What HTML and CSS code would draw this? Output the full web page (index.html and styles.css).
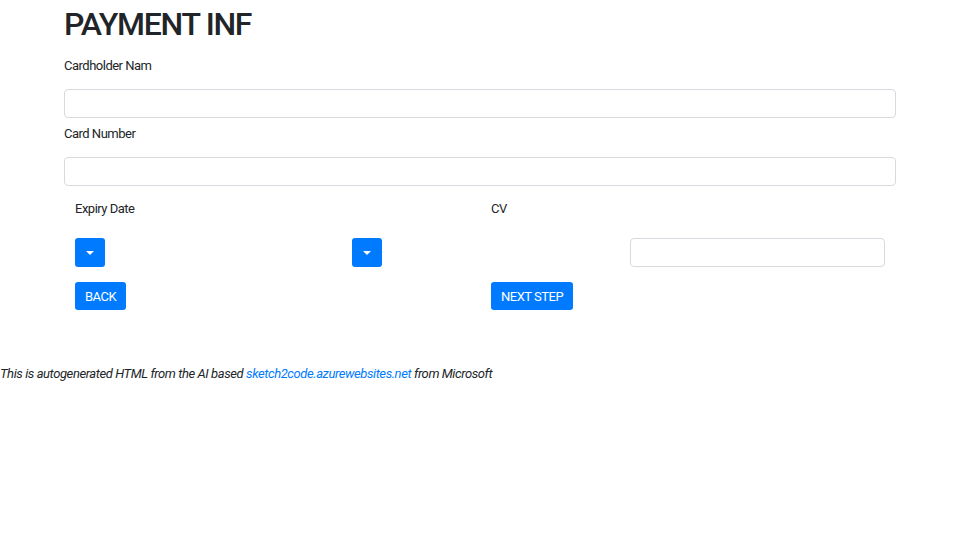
FILE: index.html
```html
<!DOCTYPE html>
<html>
<head>
	<title>Payment</title>
	<link rel="stylesheet" href="styles.css">
</head>
<body>
	<div class="page">
		<h1 class="title">PAYMENT INF</h1>
		<div class="field">
			<label>Cardholder Nam</label>
			<input type="text" class="text-input">
		</div>
		<div class="field">
			<label>Card Number</label>
			<input type="text" class="text-input">
		</div>

		<div class="row two">
			<div class="col"><label>Expiry Date</label></div>
			<div class="col"><label>CV</label></div>
		</div>
		<div class="row three">
			<div class="col"><button class="caret-btn"><span class="caret"></span></button></div>
			<div class="col"><button class="caret-btn"><span class="caret"></span></button></div>
			<div class="col"><input type="text" class="text-input"></div>
		</div>
		<div class="row two">
			<div class="col"><button class="btn">BACK</button></div>
			<div class="col"><button class="btn">NEXT STEP</button></div>
		</div>
	</div>
	<p class="footer">This is autogenerated HTML from the AI based <a href="#">sketch2code.azurewebsites.net</a> from Microsoft</p>
</body>
</html>
```

FILE: styles.css
```css
body {
	margin: 0;
	font-family: Roboto, "Liberation Sans", sans-serif;
	font-size: 13px;
	letter-spacing: -0.5px;
	color: #212529;
	background: #fff;
}

.page {
	padding: 0 64px;
}

/* heading */
.title {
	margin: 0 0 6px;
	font-size: 32px;
	font-weight: 500;
	letter-spacing: -1.3px;
	line-height: 48px;
}

label {
	display: block;
	line-height: 24px;
}

.field label {
	margin-bottom: 11px;
}

.field {
	margin-bottom: 4px;
}

.text-input {
	display: block;
	box-sizing: border-box;
	width: 100%;
	height: 29px;
	margin: 0;
	border: 1px solid #d6dade;
	border-radius: 4px;
	background: #fff;
	font: inherit;
}

/* columns */
.row {
	display: flex;
}

.row .col {
	flex: 1;
	padding: 0 11px;
	min-width: 0;
}

.row.two {
	margin-top: 11px;
}

.row.three + .row.two {
	margin-top: 0;
}

.row.two label {
	margin-bottom: 17px;
}

.row.three {
	margin-bottom: 15px;
}

.caret-btn {
	display: flex;
	align-items: center;
	justify-content: center;
	width: 30px;
	height: 29px;
	padding: 0;
	border: none;
	border-radius: 3px;
	background: #007bff;
}

.caret {
	width: 0;
	height: 0;
	border-top: 4px solid #fff;
	border-left: 4px solid transparent;
	border-right: 4px solid transparent;
}

/* buttons */
.btn {
	height: 28px;
	padding: 0 10px;
	border: none;
	border-radius: 3px;
	background: #007bff;
	color: #fff;
	font-family: Roboto, "Liberation Sans", sans-serif;
	font-size: 13px;
	letter-spacing: -0.5px;
}

.footer {
	margin: 52px 0 0;
	line-height: 24px;
	font-style: italic;
	letter-spacing: -0.42px;
}

.footer a {
	color: #007bff;
	text-decoration: none;
}
```
